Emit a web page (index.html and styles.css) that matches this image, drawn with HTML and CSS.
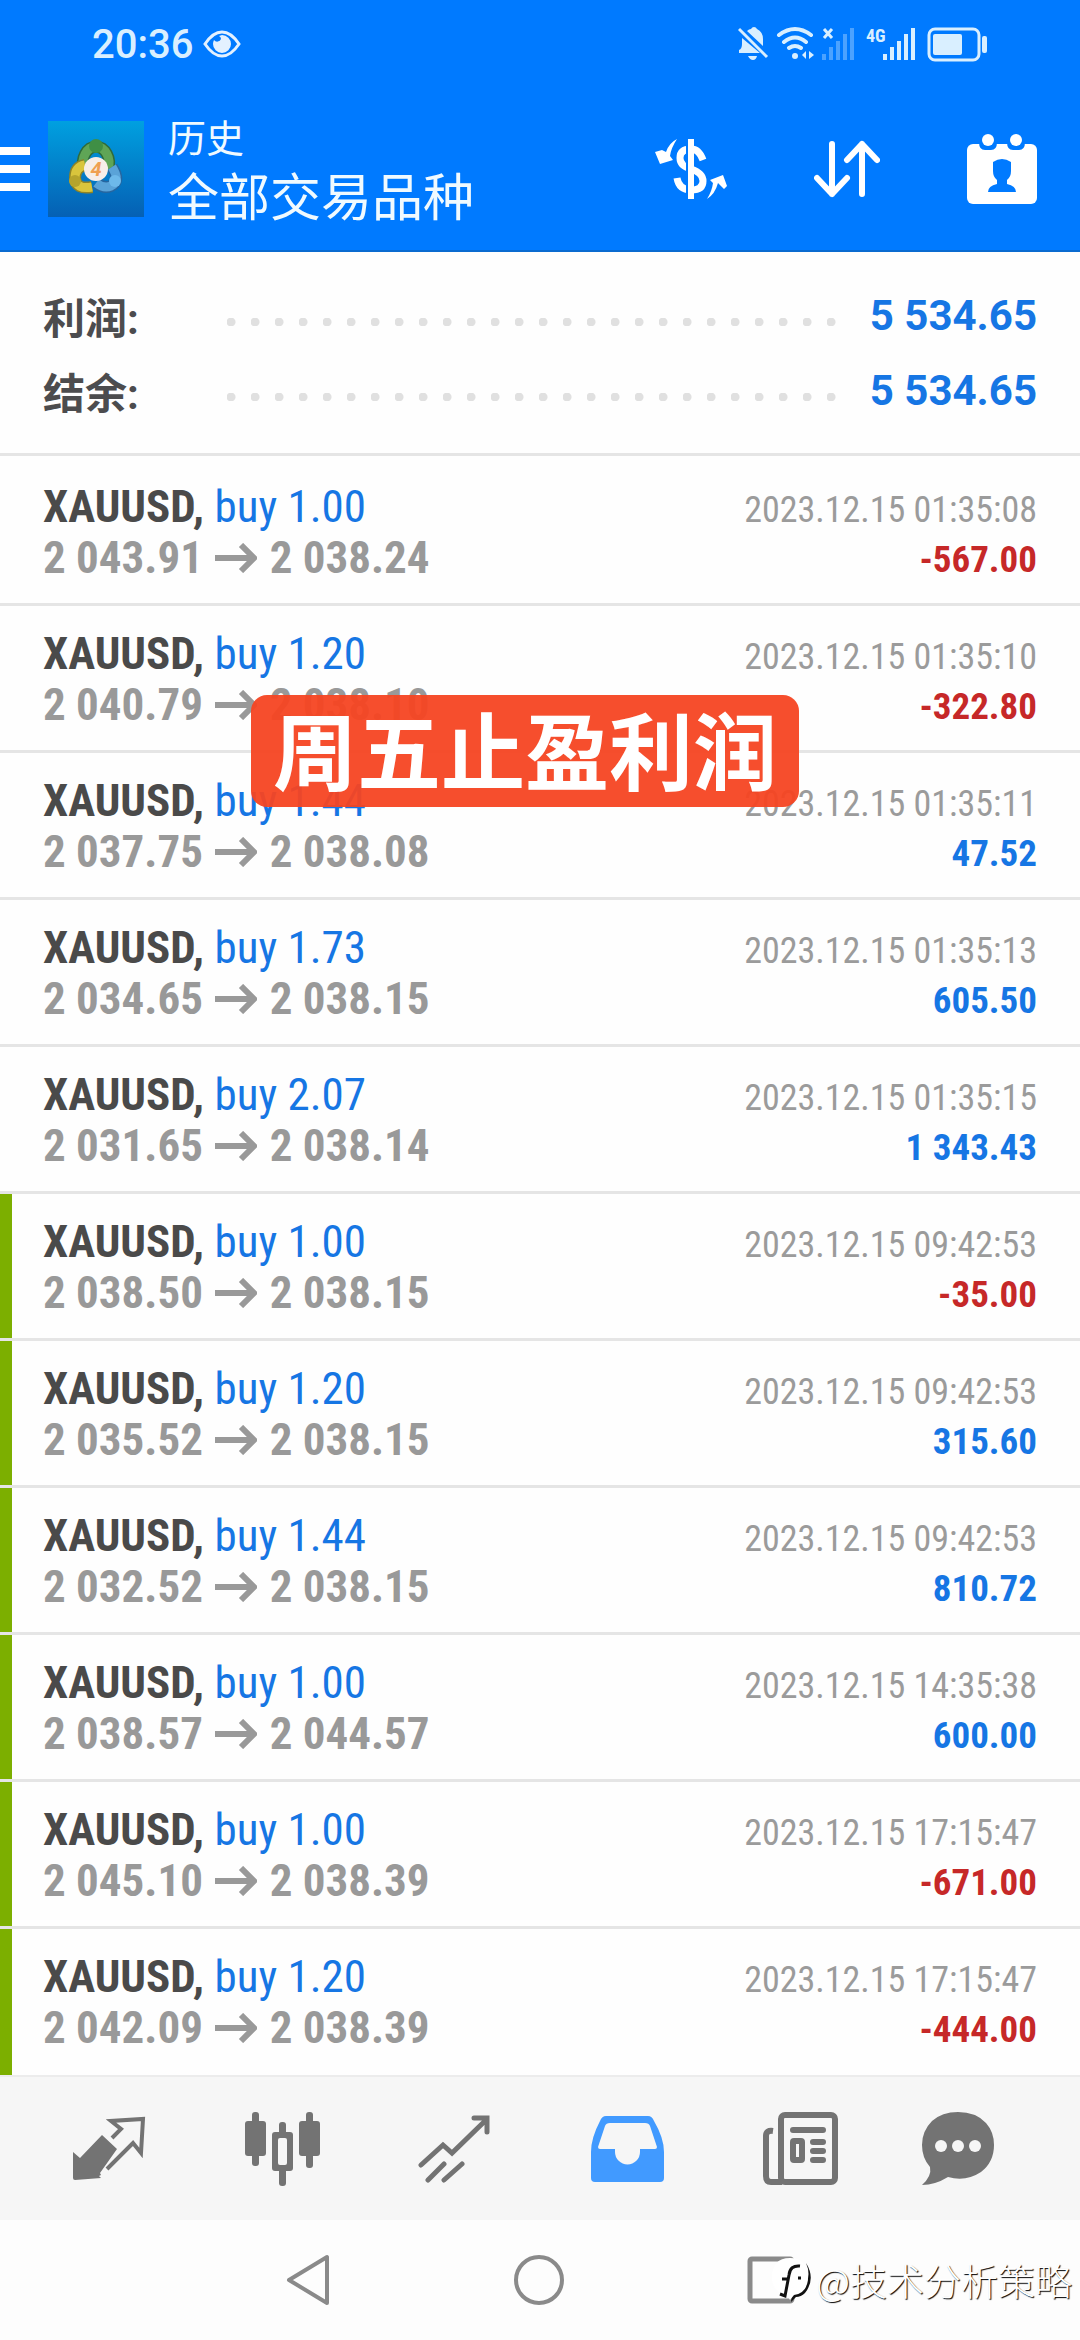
FILE: index.html
```html
<!DOCTYPE html>
<html lang="zh-CN">
<head>
  <meta charset="UTF-8" />
  <meta name="viewport" content="width=device-width, initial-scale=1.0"/>
  <title>历史</title>
  <link rel="stylesheet" href="styles.css">
</head>
<body>
  <svg width="0" height="0" class="defs">
    <symbol id="arrow" viewBox="0 0 42 30">
      <path d="M0 15H39M26 2L39 15L26 28" fill="none" stroke="currentColor" stroke-width="6"/>
    </symbol>
  </svg>

  <header class="top">
    <div class="status">
      <span class="time">20:36</span>
      <svg class="eye" width="38" height="28" viewBox="0 0 38 28">
        <path d="M2 14Q10 2 19 2T36 14Q28 26 19 26T2 14Z" fill="none" stroke="#e3f1ff" stroke-width="3"/>
        <path d="M19 5a9 9 0 1 1-9 9q0-2 1-4a4 4 0 0 0 7-1q0-2-2-3z" fill="#e3f1ff"/>
      </svg>
      <span class="spacer"></span>
      <svg width="250" height="36" viewBox="0 0 250 36" fill="#d9efff">
        <path d="M9 5Q11 3 13 3Q14 1 16 1Q18 1 19 3Q25 6 25 13V20zM4 12L22 27H1V24Q4 23 4 18zM10 30h9q-1 4-4 4t-5-4z"/>
        <path d="M1 3L29 31" stroke="#d9efff" stroke-width="3"/>
        <g fill="none" stroke="#d9efff" stroke-width="4" stroke-linecap="round">
          <path d="M41 9Q57-3 73 9M46 16Q57 7 68 16M51 22Q57 18 63 22"/>
        </g>
        <circle cx="57" cy="30" r="3"/>
        <path d="M64 29l4-4v8zM76 29l-5-4v8z"/>
        <path d="M86 3l8 9M94 3l-8 9" stroke="#d9efff" stroke-width="3"/>
        <path d="M84 28h4v6h-4zM91 21h4v13h-4zM98 15h4v19h-4zM105 8h4v26h-4zM112 2h4v32h-4z" opacity=".35"/>
        <text x="128" y="16" class="net">4G</text>
        <path d="M145 28h4v6h-4zM152 21h4v13h-4zM159 15h4v19h-4zM166 8h4v26h-4zM173 2h4v32h-4z"/>
        <rect x="191" y="3" width="50" height="31" rx="6" fill="none" stroke="#d9efff" stroke-width="3"/>
        <rect x="195" y="8" width="29" height="21" rx="2"/>
        <rect x="244" y="10" width="5" height="17" rx="2"/>
      </svg>
    </div>
    <div class="bar">
      <button class="icon-btn" aria-label="菜单">
        <svg width="30" height="44" viewBox="0 0 30 44" fill="#fff"><path d="M0 0h30v8H0zM0 18h30v8H0zM0 36h30v8H0z"/></svg>
      </button>
      <svg class="logo" width="96" height="96" viewBox="0 0 96 96">
        <defs>
          <linearGradient id="sky" x1="0" y1="0" x2="0" y2="1"><stop offset="0" stop-color="#00a0e0"/><stop offset="1" stop-color="#0560b4"/></linearGradient>
        </defs>
        <rect width="96" height="96" fill="url(#sky)"/>
        <g fill="none" stroke-width="9">
          <path d="M36 48A13 16 0 1 1 60 48" stroke="#2f6b3a" stroke-width="12"/>
          <path d="M36 48A13 16 0 1 1 60 48" stroke="#5fa556"/>
          <path d="M48 62Q56 68 63 65Q73 60 64 46" stroke="#2666a0" stroke-width="12"/>
          <path d="M48 62Q56 68 63 65Q73 60 64 46" stroke="#5aa3d8"/>
          <path d="M44 66Q28 69 27 57Q27 46 37 44" stroke="#8d8328" stroke-width="12"/>
          <path d="M44 66Q28 69 27 57Q27 46 37 44" stroke="#d9c53c"/>
        </g>
        <circle cx="48" cy="25" r="7" fill="#3f8f45"/>
        <circle cx="27" cy="60" r="6" fill="#b5a42c"/>
        <circle cx="67" cy="60" r="6" fill="#6db9ea"/>
        <circle cx="48" cy="48" r="12" fill="#f6eee8"/>
        <text x="48" y="55" class="logo-num">4</text>
      </svg>
      <h1 class="title"><small>历史</small>全部交易品种</h1>
      <div class="actions">
        <button class="icon-btn" aria-label="货币">
          <svg width="72" height="62" viewBox="0 0 72 62" fill="#fff">
            <path d="M48 22Q44 11 36 11Q25 11 25 20Q25 28 36 31Q48 35 48 43Q48 52 36 52Q24 52 22 40" fill="none" stroke="#fff" stroke-width="7"/>
            <path d="M31 0h3v62h-3z" fill="#007aff"/>
            <path d="M33 1h6v60h-6z"/>
            <path d="M22 1Q14 5 11 14L7 12L0 14L5 26L18 22L15 18Q16 10 22 1zM52 61Q60 56 63 45L69 51L72 48L68 37L55 42L58 45Q57 53 52 61z"/>
          </svg>
        </button>
        <button class="icon-btn" aria-label="排序">
          <svg width="66" height="58" viewBox="0 0 66 58" fill="none" stroke="#fff" stroke-width="6" stroke-linecap="round" stroke-linejoin="round">
            <path d="M18 4V54M3 38L18 54L33 38M48 54V4M33 20L48 4L63 20"/>
          </svg>
        </button>
        <button class="icon-btn" aria-label="日期">
          <svg width="70" height="70" viewBox="0 0 70 70">
            <rect y="10" width="70" height="60" rx="6" fill="#fff"/>
            <path d="M12 8h18q0 8-6 8h-6q-6 0-6-8zM40 8h18q0 8-6 8h-6q-6 0-6-8z" fill="#007aff"/>
            <circle cx="21" cy="6" r="6" fill="#fff"/><circle cx="49" cy="6" r="6" fill="#fff"/>
            <path d="M26 28q9-6 18 0v9q0 6-4 9v4q9 2 9 8H21q0-6 9-8v-4q-4-3-4-9z" fill="#007aff"/>
          </svg>
        </button>
      </div>
    </div>
  </header>

  <main>
    <dl class="summary">
      <div><dt>利润:</dt><dd class="dots"></dd><dd>5 534.65</dd></div>
      <div><dt>结余:</dt><dd class="dots"></dd><dd>5 534.65</dd></div>
    </dl>

    <div class="history">
      <ul class="deals">
        <li>
          <div><p class="symbol">XAUUSD, <span>buy 1.00</span></p><p class="price">2 043.91 <svg><use href="#arrow"/></svg> 2 038.24</p></div>
          <div class="result"><time>2023.12.15 01:35:08</time><b class="loss">-567.00</b></div>
        </li>
        <li>
          <div><p class="symbol">XAUUSD, <span>buy 1.20</span></p><p class="price">2 040.79 <svg><use href="#arrow"/></svg> 2 038.10</p></div>
          <div class="result"><time>2023.12.15 01:35:10</time><b class="loss">-322.80</b></div>
        </li>
        <li>
          <div><p class="symbol">XAUUSD, <span>buy 1.44</span></p><p class="price">2 037.75 <svg><use href="#arrow"/></svg> 2 038.08</p></div>
          <div class="result"><time>2023.12.15 01:35:11</time><b>47.52</b></div>
        </li>
        <li>
          <div><p class="symbol">XAUUSD, <span>buy 1.73</span></p><p class="price">2 034.65 <svg><use href="#arrow"/></svg> 2 038.15</p></div>
          <div class="result"><time>2023.12.15 01:35:13</time><b>605.50</b></div>
        </li>
        <li>
          <div><p class="symbol">XAUUSD, <span>buy 2.07</span></p><p class="price">2 031.65 <svg><use href="#arrow"/></svg> 2 038.14</p></div>
          <div class="result"><time>2023.12.15 01:35:15</time><b>1 343.43</b></div>
        </li>
        <li class="tp">
          <div><p class="symbol">XAUUSD, <span>buy 1.00</span></p><p class="price">2 038.50 <svg><use href="#arrow"/></svg> 2 038.15</p></div>
          <div class="result"><time>2023.12.15 09:42:53</time><b class="loss">-35.00</b></div>
        </li>
        <li class="tp">
          <div><p class="symbol">XAUUSD, <span>buy 1.20</span></p><p class="price">2 035.52 <svg><use href="#arrow"/></svg> 2 038.15</p></div>
          <div class="result"><time>2023.12.15 09:42:53</time><b>315.60</b></div>
        </li>
        <li class="tp">
          <div><p class="symbol">XAUUSD, <span>buy 1.44</span></p><p class="price">2 032.52 <svg><use href="#arrow"/></svg> 2 038.15</p></div>
          <div class="result"><time>2023.12.15 09:42:53</time><b>810.72</b></div>
        </li>
        <li class="tp">
          <div><p class="symbol">XAUUSD, <span>buy 1.00</span></p><p class="price">2 038.57 <svg><use href="#arrow"/></svg> 2 044.57</p></div>
          <div class="result"><time>2023.12.15 14:35:38</time><b>600.00</b></div>
        </li>
        <li class="tp">
          <div><p class="symbol">XAUUSD, <span>buy 1.00</span></p><p class="price">2 045.10 <svg><use href="#arrow"/></svg> 2 038.39</p></div>
          <div class="result"><time>2023.12.15 17:15:47</time><b class="loss">-671.00</b></div>
        </li>
        <li class="tp">
          <div><p class="symbol">XAUUSD, <span>buy 1.20</span></p><p class="price">2 042.09 <svg><use href="#arrow"/></svg> 2 038.39</p></div>
          <div class="result"><time>2023.12.15 17:15:47</time><b class="loss">-444.00</b></div>
        </li>
      </ul>
      <div class="banner">周五止盈利润</div>
    </div>
  </main>

  <nav class="tabs">
    <button class="icon-btn" aria-label="行情">
      <svg width="74" height="66" viewBox="0 0 74 66">
        <path d="M29 19L44 33L27 57L28 59L26 60L28 62L2 64Q0 64 0 62V36L7 42z" fill="#737373"/>
        <path d="M39 22L48 13L38 5L70 3L68 37L60 27L34 53" fill="none" stroke="#737373" stroke-width="4"/>
      </svg>
    </button>
    <button class="icon-btn" aria-label="图表">
      <svg width="76" height="74" viewBox="0 0 76 74" fill="#737373">
        <rect x="7" width="7" height="54" rx="3"/><rect y="9" width="21" height="35" rx="3"/>
        <rect x="61" width="7" height="56" rx="3"/><rect x="54" y="9" width="21" height="35" rx="3"/>
        <rect x="34" y="10" width="7" height="64" rx="3"/><rect x="27" y="20" width="21" height="39" rx="3"/>
        <rect x="33" y="26" width="9" height="27" rx="2" fill="#f6f6f6"/>
      </svg>
    </button>
    <button class="icon-btn" aria-label="交易">
      <svg width="74" height="68" viewBox="0 0 74 68" fill="none" stroke="#737373" stroke-width="5" stroke-linecap="round">
        <path d="M3 50L25 30L34 38L68 5M56 3H69V17M10 65L26 49M26 65L44 49"/>
      </svg>
    </button>
    <button class="icon-btn" aria-label="历史">
      <svg width="74" height="66" viewBox="0 0 74 66">
        <path d="M16 0H58Q62 0 64 5Q74 22 74 36V62Q74 66 70 66H5Q1 66 1 62V36Q1 22 10 5Q12 0 16 0z" fill="#419aff"/>
        <path d="M20 7H55Q59 7 60 10L67 31Q67 33 65 33H50V36A12 12 0 0 1 25 36V33H10Q8 33 8 31L15 10Q16 7 20 7z" fill="#f6f6f6"/>
      </svg>
    </button>
    <button class="icon-btn" aria-label="新闻">
      <svg width="76" height="74" viewBox="0 0 76 74" fill="none" stroke="#737373" stroke-width="6">
        <rect x="19" y="3" width="54" height="67" rx="4"/>
        <path d="M11 19Q4 18 4 24V64Q4 70 9 70H20"/>
        <path d="M31 18H61M51 30H61M51 39H61M51 48H61" stroke-linecap="round"/>
        <rect x="31" y="29" width="9" height="19" rx="1"/>
      </svg>
    </button>
    <button class="icon-btn" aria-label="消息">
      <svg width="74" height="74" viewBox="0 0 74 74">
        <path d="M37 0Q55 0 65 11Q73 20 73 33Q73 50 60 60Q45 70 27 65Q14 73 1 73Q11 64 9 55Q1 46 1 33Q1 19 11 9Q21 0 37 0z" fill="#737373"/>
        <g fill="#f6f6f6"><circle cx="20" cy="34" r="6"/><circle cx="37" cy="34" r="6"/><circle cx="54" cy="34" r="6"/></g>
      </svg>
    </button>
  </nav>

  <footer class="system">
    <button class="icon-btn" aria-label="返回">
      <svg width="46" height="52" viewBox="0 0 46 52" fill="none" stroke="#8a8a8a" stroke-width="4" stroke-linejoin="round"><path d="M42 3V49L4 26z"/></svg>
    </button>
    <button class="icon-btn" aria-label="主页">
      <svg width="52" height="52" viewBox="0 0 52 52" fill="none" stroke="#8a8a8a" stroke-width="4"><circle cx="26" cy="26" r="23"/></svg>
    </button>
    <button class="icon-btn" aria-label="最近">
      <svg width="48" height="48" viewBox="0 0 48 48" fill="none" stroke="#8a8a8a" stroke-width="5"><rect x="3" y="3" width="42" height="42" rx="2"/></svg>
    </button>
    <div class="watermark">
      <svg width="40" height="46" viewBox="0 0 40 46">
        <path d="M34 6Q44 22 33 36Q29 40 24 40L19 45L20 37Q30 37 34 28Q39 17 34 6z" fill="#111"/>
        <path d="M18 1Q36 1 36 20Q36 36 22 38L18 43L15 38Q0 36 0 20Q0 1 18 1z" fill="#fff"/>
        <path d="M28 9Q18 8 17 18L13 39L8 37M10 22H17M26 21h3" fill="none" stroke="#111" stroke-width="3"/>
      </svg>
      <span>@技术分析策略</span>
    </div>
  </footer>
</body>
</html>
```
FILE: styles.css
```css
* {
  box-sizing: border-box;
}

body {
  margin: 0;
  min-height: 100vh;
  display: flex;
  flex-direction: column;
  background-color: #fefefe;
  font-family: Roboto, "Noto Sans CJK SC", sans-serif;
}

p, h1, ul, dl, dd {
  margin: 0;
  padding: 0;
}

svg {
  display: block;
  flex-shrink: 0;
}

.defs {
  position: absolute;
}

.icon-btn {
  display: flex;
  align-items: center;
  justify-content: center;
  padding: 0;
  border: none;
  background: none;
  cursor: pointer;
}

/* blue header */
.top {
  background-color: #007aff;
  border-bottom: 2px solid #0a6bd0;
}

.status {
  display: flex;
  align-items: center;
  height: 88px;
  padding: 0 92px;
}

.time {
  font-size: 40px;
  font-weight: 500;
  color: #d9efff;
}

.eye {
  margin-left: 10px;
}

.spacer {
  flex: 1;
}

.net {
  font: bold 18px "Roboto Condensed", Roboto, sans-serif;
}

.bar {
  display: flex;
  align-items: center;
  height: 162px;
  padding-right: 43px;
}

.logo {
  margin: 0 24px 0 18px;
}

.logo-num {
  font: italic bold 20px Roboto, sans-serif;
  fill: #efa050;
  text-anchor: middle;
}

.title {
  flex: 1;
  font-size: 51px;
  line-height: 60px;
  font-weight: 400;
  color: #f0faff;
}

.title small {
  display: block;
  font-size: 38px;
}

.actions {
  display: flex;
  gap: 87px;
}

/* totals */
.summary {
  padding: 26px 43px 25px;
  border-bottom: 3px solid #e5e5e5;
}

.summary div {
  display: flex;
  align-items: center;
  height: 75px;
  font-size: 42px;
  font-weight: 700;
}

.summary dt {
  width: 184px;
  color: #4c4c4e;
}

.summary dd {
  color: #1676e4;
}

.summary .dots {
  flex: 1;
  height: 8px;
  margin: 12px 24px 0 0;
  background: radial-gradient(circle at 4px 4px, #e0e0e0 4px, transparent 5px) 0 0 / 24px 8px;
}

/* deals */
.history {
  position: relative;
}

.deals {
  list-style: none;
  font-family: "Roboto Condensed", Roboto, sans-serif;
}

.deals li {
  display: flex;
  justify-content: space-between;
  height: 147px;
  padding: 22px 43px 0;
  border-bottom: 3px solid #e5e5e5;
}

.deals li:first-child {
  height: 150px;
  padding-top: 25px;
}

.deals li:last-child {
  height: 146px;
  border-bottom: none;
}

.deals .tp {
  background: linear-gradient(#7caf00, #7caf00) no-repeat 0 0 / 12px 100%;
}

.symbol, .price {
  font-size: 45px;
  line-height: 51px;
  font-weight: 700;
  color: #4a4a4a;
}

.symbol span {
  font-weight: 400;
  color: #1676e4;
}

.price {
  color: #999;
}

.price svg {
  display: inline-block;
  width: 42px;
  height: 30px;
  margin: 0 2px;
}

.result {
  padding-top: 4px;
  font-size: 37px;
  line-height: 50px;
  text-align: right;
  color: #9b9b9b;
}

.result time {
  font-size: 36px;
}

.result b {
  display: block;
  color: #1676e4;
}

.result .loss {
  color: #c62828;
}

.banner {
  position: absolute;
  top: 239px;
  left: 251px;
  padding: 10px 22px 0;
  border-radius: 16px;
  background-color: #f54522f2;
  color: #fff;
  font-size: 84px;
  line-height: 102px;
  font-weight: 700;
}

/* bottom tabs */
.tabs {
  display: grid;
  grid-template-columns: repeat(5, 172fr) 144fr;
  height: 145px;
  padding: 0 50px 0 24px;
  border-top: 2px solid #ececec;
  background-color: #f6f6f6;
}

.system {
  position: relative;
  display: flex;
  flex: 1;
  align-items: center;
  justify-content: center;
  gap: 182px;
  min-height: 118px;
  background-color: #fdfdfd;
}

.watermark {
  position: absolute;
  right: 8px;
  display: flex;
  align-items: center;
  gap: 4px;
  font-family: "Noto Sans CJK SC", sans-serif;
  font-size: 37px;
  line-height: 46px;
  font-weight: 300;
  color: #fff;
  text-shadow: 1px 1px 1px #000;
}
```
